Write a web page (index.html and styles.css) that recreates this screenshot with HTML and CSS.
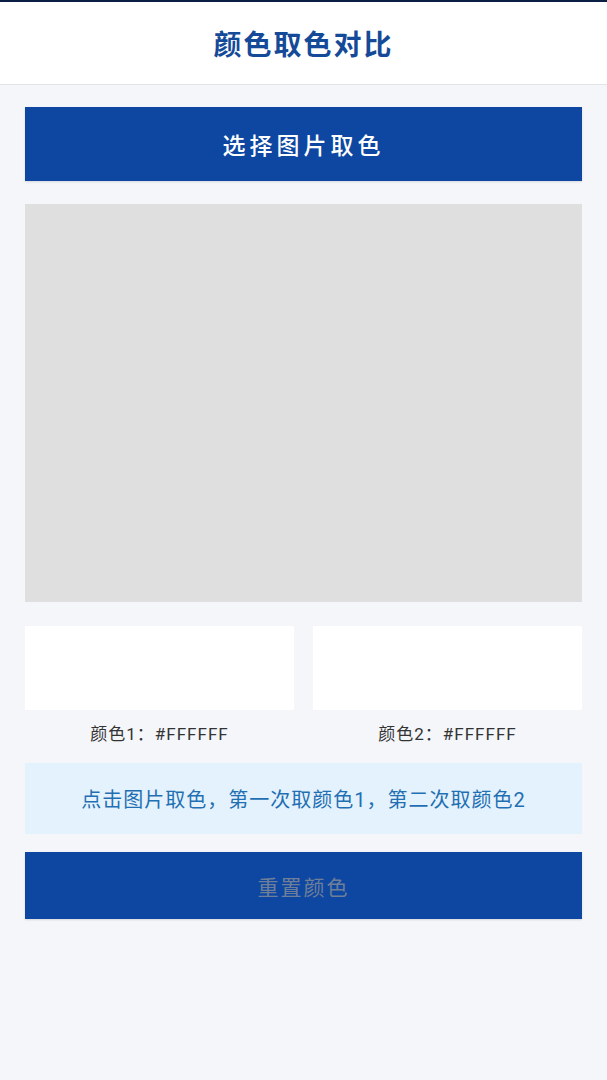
FILE: index.html
```html
<!DOCTYPE html>
<html lang="zh-CN">
<head>
  <meta charset="UTF-8">
  <title>颜色取色对比</title>
  <link rel="stylesheet" href="styles.css">
</head>
<body>
  <div class="app-header">
    <h1>颜色取色对比</h1>
  </div>
  <div class="page">
    <button class="pick-btn">选择图片取色</button>
    <div class="image-box"></div>
    <div class="swatch-row">
      <div class="swatch-col">
        <div class="swatch"></div>
        <div class="swatch-label">颜色1：#FFFFFF</div>
      </div>
      <div class="swatch-col">
        <div class="swatch"></div>
        <div class="swatch-label">颜色2：#FFFFFF</div>
      </div>
    </div>
    <div class="tip-box">点击图片取色，第一次取颜色1，第二次取颜色2</div>
    <button class="reset-btn" disabled>重置颜色</button>
  </div>
</body>
</html>
```

FILE: styles.css
```css
body {
  margin: 0;
  background: #f4f6fa;
  font-family: Roboto, "Noto Sans CJK SC", sans-serif;
  min-height: 100vh;
}
.app-header {
  background: #fff;
  border-top: 2px solid #0b1f45;
  border-bottom: 1px solid #e2e4e8;
  height: 82px;
  display: flex;
  align-items: center;
  justify-content: center;
}
.app-header h1 {
  margin: 0;
  font-size: 28px;
  font-weight: bold;
  color: #154a98;
  letter-spacing: 2px;
}
.page {
  padding: 22px 25px;
  display: flex;
  flex-direction: column;
}
.pick-btn, .reset-btn {
  border: none;
  background: #0d47a1;
  font-family: inherit;
  width: 100%;
  box-shadow: 0 1px 2px rgba(0,0,0,0.12);
}
.pick-btn {
  height: 74px;
  color: #fff;
  font-size: 23px;
  letter-spacing: 4px;
  font-weight: 500;
}
.image-box {
  margin-top: 23px;
  height: 398px;
  background: #dfdfdf;
}
.swatch-row {
  margin-top: 24px;
  display: flex;
  gap: 19px;
}
.swatch-col {
  flex: 1;
}
.swatch {
  height: 84px;
  background: #fff;
}
.swatch-label {
  margin-top: 13px;
  text-align: center;
  font-size: 17px;
  letter-spacing: 1px;
  color: #333;
  line-height: 22px;
}
.tip-box {
  margin-top: 18px;
  height: 71px;
  background: #e3f2fd;
  color: #1f6fb2;
  font-size: 20px;
  letter-spacing: 1px;
  display: flex;
  align-items: center;
  justify-content: center;
}
.reset-btn {
  margin-top: 18px;
  height: 67px;
  color: #6f7f99;
  font-size: 21px;
  letter-spacing: 2px;
}
```
